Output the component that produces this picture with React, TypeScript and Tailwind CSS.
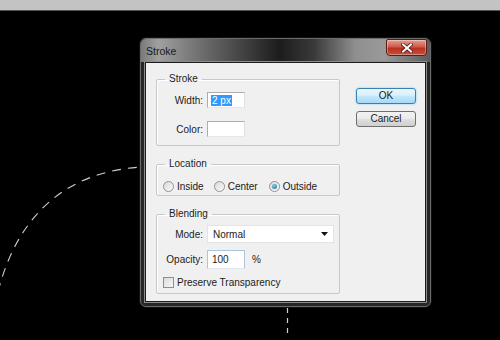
import React from 'react';

function Radio({ label, checked }: { label: string; checked?: boolean }) {
  return (
    <label className="flex items-center gap-[3px]">
      <span className="w-[11px] h-[11px] rounded-full border border-[#8f9398] bg-[linear-gradient(135deg,#d8d8d8,#fbfbfb)] flex items-center justify-center">
        {checked && <span className="w-[5px] h-[5px] rounded-full bg-[radial-gradient(circle_at_40%_35%,#7fd0f4,#1c5f8c)]" />}
      </span>
      <span>{label}</span>
    </label>
  );
}

function GroupBox({ title, className, children }: { title: string; className?: string; children: React.ReactNode }) {
  return (
    <fieldset className={`border border-[#c6c9cc] rounded-[2px] shadow-[inset_1px_1px_0_#fff] ${className ?? ''}`}>
      <legend className="ml-[8px] px-[4px] leading-[12px]">{title}</legend>
      {children}
    </fieldset>
  );
}

export default function App() {
  return (
    <div className="relative w-[500px] h-[340px] bg-black overflow-hidden font-['Liberation_Sans',Arial,sans-serif] text-[10px] text-[#1b1b1b]">
      {/* top toolbar strip */}
      <div className="h-[11px] bg-[#c3c3c3] border-b border-[#555]" />

      {/* marching ants */}
      <svg className="absolute inset-0 pointer-events-none" width="500" height="340">
        <path d="M -2 292 C 14 228, 55 172, 142 167" fill="none" stroke="#cfcfcf" strokeWidth="1.1" strokeDasharray="9 7" />
        <line x1="287.5" y1="308" x2="287.5" y2="336" stroke="#cfcfcf" strokeWidth="1.2" strokeDasharray="5 5" />
      </svg>

      {/* dialog window */}
      <div className="absolute left-[140px] top-[38px] w-[291px] h-[269px] rounded-[6px] border border-[#6a6a6a] bg-[#262626] flex flex-col px-[4px] pb-[4px] shadow-[0_0_0_1px_#111]">
        <div className="-mx-[4px] h-[23px] rounded-t-[5px] flex items-start justify-between bg-[linear-gradient(90deg,#7a7a7a_0%,#a0a0a0_6%,#6a6a6a_22%,#1c1c1c_48%,#3a3a3a_60%,#8e8e8e_74%,#9a9a9a_84%,#5c5c5c_100%)]">
          <span className="ml-[5px] mt-[6px] text-[10.5px] text-[#1a1a1a] leading-[12px]">Stroke</span>
          <button className="mr-[3px] w-[41px] h-[17px] rounded-b-[4px] rounded-t-[2px] border border-[#5a1c16] bg-[linear-gradient(180deg,#e3a191_0%,#d2594a_45%,#b9301f_55%,#c4503a_100%)] flex items-center justify-center shadow-[inset_0_0_0_1px_rgba(255,255,255,0.35)]">
            <svg width="12" height="10" viewBox="0 0 12 10">
              <path d="M2 1.5 L10 8.5 M10 1.5 L2 8.5" stroke="#4a1510" strokeWidth="3.6" strokeLinecap="square" />
              <path d="M2 1.5 L10 8.5 M10 1.5 L2 8.5" stroke="#fff" strokeWidth="2" strokeLinecap="square" />
            </svg>
          </button>
        </div>

        <div className="flex-1 bg-[#f0f0f0] border border-[#1d1d1d] shadow-[0_0_0_1px_#8c8c8c] flex pl-[10px] pr-[8px] pt-[10px]">
          {/* left column */}
          <div className="w-[184px] flex flex-col">
            <GroupBox title="Stroke">
              <div className="grid grid-cols-[46px_38px] items-center gap-x-[4px] gap-y-[13px] pt-[7px] pb-[8px]">
                <span className="text-right">Width:</span>
                <div className="h-[16px] bg-white border border-[#abadb3] border-b-[#e3e9ef] border-r-[#dbdfe6] flex items-center pl-[3px]">
                  <span className="bg-[#3399ff] text-white leading-[11px] px-[1px]">2 px</span>
                </div>
                <span className="text-right">Color:</span>
                <div className="h-[16px] bg-white border border-[#abadb3] border-b-[#e3e9ef] border-r-[#dbdfe6]" />
              </div>
            </GroupBox>

            <GroupBox title="Location" className="mt-[12px]">
              <div className="flex items-center h-[12px] mt-[10px] mb-[3px] pl-[6px]">
                <Radio label="Inside" />
                <div className="ml-[10px]"><Radio label="Center" /></div>
                <div className="ml-[11px]"><Radio label="Outside" checked /></div>
              </div>
            </GroupBox>

            <GroupBox title="Blending" className="mt-[12px]">
              <div className="grid grid-cols-[46px_auto] items-center gap-x-[4px] pt-[5px]">
                <span className="text-right">Mode:</span>
                <div className="w-[127px] h-[18px] bg-white border border-[#e2e3e4] flex items-center justify-between pl-[5px] pr-[5px]">
                  <span>Normal</span>
                  <svg width="7" height="4" viewBox="0 0 7 4"><path d="M0 0 H7 L3.5 4 Z" fill="#111" /></svg>
                </div>
                <span className="text-right mt-[7px]">Opacity:</span>
                <div className="flex items-center mt-[7px]">
                  <div className="w-[38px] h-[19px] bg-white border border-[#aec4dc] border-b-[#e3e9ef] flex items-center pl-[4px]">100</div>
                  <span className="ml-[7px]">%</span>
                </div>
              </div>
              <div className="flex items-center gap-[3px] h-[11px] mt-[8px] mb-[5px] pl-[6px]">
                <span className="w-[11px] h-[11px] border border-[#8f8f8f] bg-[linear-gradient(135deg,#dcdcdc,#f7f7f7)]" />
                <span>Preserve Transparency</span>
              </div>
            </GroupBox>
          </div>

          {/* buttons */}
          <div className="ml-[16px] mt-[15px] w-[60px] flex flex-col gap-[7px]">
            <button className="h-[16px] rounded-[3px] border border-[#3c7fb1] bg-[linear-gradient(180deg,#eaf6fd_0%,#d9f0fc_45%,#bee6fd_55%,#a7d9f5_100%)] shadow-[0_0_2px_#62c6f2] leading-[12px]">OK</button>
            <button className="h-[16px] rounded-[3px] border border-[#707070] bg-[linear-gradient(180deg,#f2f2f2_0%,#ebebeb_45%,#dddddd_55%,#cfcfcf_100%)] leading-[12px]">Cancel</button>
          </div>
        </div>
      </div>
    </div>
  );
}
